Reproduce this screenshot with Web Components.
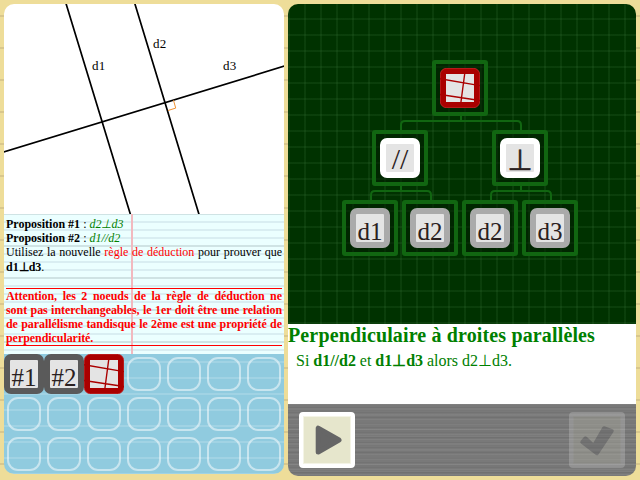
<!DOCTYPE html>
<html lang="fr">
<head>
<meta charset="utf-8">
<title>Déduction</title>
<style>
html,body{margin:0;height:100%}
body{font-family:"Liberation Serif",serif;overflow:hidden;color:#000}
</style>
</head>
<body>
<game-app></game-app>
<script>
function define(name, markup) {
  const t = document.createElement('template');
  t.innerHTML = markup;
  customElements.define(name, class extends HTMLElement {
    constructor() {
      super();
      this.attachShadow({mode: 'open'}).append(t.content.cloneNode(true));
    }
  });
}

define('geometry-figure', `
<style>
:host{display:block;height:210px;background:#fff}
svg{display:block}
text{font-size:13px;letter-spacing:.3px}
</style>
<svg width="280" height="210" viewBox="4 4 280 210">
  <g stroke="#000" stroke-width="1.7">
    <path d="M66 3.5L130.6 215M134.8 3.5L199.200 215M3 152.200L285 65.900"/>
  </g>
  <path d="M173.500 100.200L175.700 108.100L168 110.500" fill="none" stroke="#f09030" stroke-width="1"/>
  <text x="92" y="70">d1</text><text x="153" y="48">d2</text><text x="223" y="70">d3</text>
</svg>`);

define('rule-paper', `
<style>
:host{display:block;box-sizing:border-box;height:140px;padding:3px 2px 0;font-size:12px;line-height:14px;text-align:justify;
 background:linear-gradient(#f2b9bf,#f2b9bf) 127px 0/2px 100% no-repeat,
 repeating-linear-gradient(#cfe3e4 0 1px,transparent 1px 31px,#cfe3e4 31px 32px),
 repeating-linear-gradient(#d9eef2 0 1px,#ebffff 1px 7px,#d9eef2 7px 8px)}
::slotted(p){margin:0}
::slotted(.warn){margin-top:13px!important;border-top:1px solid red;border-bottom:1px solid red;color:red;font-weight:bold;letter-spacing:-.06px}
</style><slot></slot>`);

define('inventory-slot', `
<style>
:host{display:grid;place-items:center;width:40px;height:40px}
.ring{box-sizing:border-box;width:34px;height:34px;border:2px solid rgba(255,255,255,.5);border-radius:11px}
</style><slot><div class="ring"></div></slot>`);

define('inventory-grid', `
<style>
:host{display:grid;grid-template-columns:repeat(7,40px);grid-auto-rows:40px;height:120px;
background:repeating-linear-gradient(#90cbdf 0 7px,#a1d3e4 7px 9px,#90cbdf 9px 16px)}
</style><slot></slot>`);

define('symbol-tile', `
<style>
:host{display:block;box-sizing:border-box;width:40px;height:40px;border:6px solid var(--edge,#aaa);border-radius:7px;background:#e4e4e4;
color:#2a2020;font-size:25px;line-height:28px;text-align:center;white-space:nowrap}
:host([large]){font-size:30px}
:host([perp]){font:29px/28px "DejaVu Sans",sans-serif;-webkit-text-stroke:.5px #2a2020}
:host([large]) .in{padding-top:1px}
:host([perp]) .in{padding-top:2px}
.in{display:flex;justify-content:center;padding-top:4px;height:28px;box-sizing:border-box}
</style><div class="in"><slot></slot></div>`);

define('rule-tile', `
<style>:host{display:block;width:40px;height:40px}svg{display:block}</style>
<svg width="40" height="40" viewBox="0 0 40 40">
<rect width="40" height="40" rx="6.500" fill="#a00"/><rect x=".3" y=".3" width="39.400" height="39.400" rx="6.200" fill="none" stroke="#c84444" stroke-width=".5"/>
<rect x="6" y="6" width="28" height="28" fill="#e4e4e4"/>
<path d="M0 10.800L40 17.600M0 26.500L40 32.500M25.200 2L20.300 39" stroke="#a00" stroke-width="1.400"/>
</svg>`);

customElements.define('tree-fork', class extends HTMLElement {
  constructor() {
    super();
    const w = Number(this.getAttribute('width'));
    this.attachShadow({mode: 'open'}).innerHTML = `
<style>:host{display:block;height:14px;padding-left:2px}svg{display:block}</style>
<svg width="${w + 2}" height="14"><path d="M1 14V9Q1 5 5 5H${w - 3}Q${w + 1} 5 ${w + 1} 9V14M${w / 2 + 1} 0V5" fill="none" stroke="#116611" stroke-width="2"/></svg>`;
  }
});

customElements.define('deduction-board', class extends HTMLElement {
  constructor() {
    super();
    const leaf = t => `<div class="frame"><symbol-tile>${t}</symbol-tile></div>`;
    const pair = (t, kind, a, b) => `<div class="node"><div class="frame"><symbol-tile ${kind} style="--edge:#fff">${t}</symbol-tile></div>
      <tree-fork width="60"></tree-fork><div class="pair">${leaf(a)}${leaf(b)}</div></div>`;
    this.attachShadow({mode: 'open'}).innerHTML = `
<style>
:host{display:flex;box-sizing:border-box;height:320px;padding:56px 0 0 0;justify-content:center;background:
 repeating-linear-gradient(transparent 0 14px,rgba(60,120,60,.18) 14px 16px),
 repeating-linear-gradient(90deg,rgba(60,120,60,.18) 0 2px,transparent 2px 16px),#003200}
.node{display:flex;flex-direction:column;align-items:center}
.frame{box-sizing:border-box;width:56px;height:56px;border:4px solid #116611;border-radius:3px;padding:4px;background:rgba(0,25,0,.5)}
.root{margin-right:4px}
.pair{display:flex;gap:4px}
</style>
<div class="node root"><div class="frame"><rule-tile></rule-tile></div>
<tree-fork width="120"></tree-fork>
<div class="pair">${pair('//', 'large', 'd1', 'd2')}${pair('⊥', 'perp', 'd2', 'd3')}</div></div>`;
  }
});

define('rule-description', `
<style>
:host{display:block;height:80px;background:#fff;color:#008000}
::slotted(h1){margin:0!important;font-size:20px!important;line-height:23px;white-space:nowrap;letter-spacing:.14px}
::slotted(p){margin:5px 0 0 8px!important;font-size:16px;line-height:18px;letter-spacing:-.02px}
</style><slot></slot>`);

define('icon-button', `
<style>
:host{display:grid;place-items:center;box-sizing:border-box;width:56px;height:56px;border:4px solid #fff;border-radius:4px;background:#e6e6cc;box-shadow:inset 0 0 0 1px #f4f4e6}
:host([disabled]){opacity:.2}
</style><slot></slot>`);

define('control-bar', `
<style>
:host{display:flex;box-sizing:border-box;height:72px;padding:8px 11px;justify-content:space-between;
background:repeating-linear-gradient(rgba(255,255,255,.05) 0 1px,transparent 1px 3px,rgba(0,0,0,.05) 3px 4px,transparent 4px 5px),repeating-linear-gradient(#797979 0 4px,#7e7e7e 4px 5px,#777 5px 7px)}
svg{display:block}
</style>
<icon-button><svg width="48" height="48"><path d="M15.200 12.200V36L36 24Z" fill="#666" stroke="#666" stroke-width="5" stroke-linejoin="round"/></svg></icon-button>
<icon-button disabled><svg width="48" height="48"><path d="M9 26L12.500 22L20.700 29.700L31 12L39 15L24 37.500Z" fill="#555" stroke="#555" stroke-width="3.500" stroke-linejoin="round"/></svg></icon-button>`);

customElements.define('game-app', class extends HTMLElement {
  constructor() {
    super();
    const empty = '<inventory-slot></inventory-slot>'.repeat(18);
    this.attachShadow({mode: 'open'}).innerHTML = `
<style>
:host{display:grid;grid-template-columns:280px 348px;gap:4px;box-sizing:border-box;width:640px;height:480px;padding:4px;
background:repeating-linear-gradient(#eedd99 0 15px,#d9c78c 15px 17px,#eedd99 17px 32px)}
section{overflow:hidden;border-radius:10px}
.left{height:470px}.right{height:472px}
i{color:#008000}.red{color:red}.tall{line-height:16px}
</style>
<section class="left">
<geometry-figure></geometry-figure>
<rule-paper>
<p><b>Proposition #1</b> : <i>d2⊥d3</i></p>
<p><b>Proposition #2</b> : <i>d1//d2</i></p>
<p>Utilisez la nouvelle <span class="red">règle de déduction</span> pour prouver que <b class="tall">d1⊥d3</b>.</p>
<p class="warn">Attention, les 2 noeuds de la règle de déduction ne sont pas interchangeables, le 1er doit être une relation de parallélisme tandisque le 2ème est une propriété de perpendicularité.</p>
</rule-paper>
<inventory-grid>
<inventory-slot><symbol-tile style="--edge:#5a5a5a">#1</symbol-tile></inventory-slot>
<inventory-slot><symbol-tile style="--edge:#5a5a5a">#2</symbol-tile></inventory-slot>
<inventory-slot><rule-tile></rule-tile></inventory-slot>
${empty}
</inventory-grid>
</section>
<section class="right">
<deduction-board></deduction-board>
<rule-description><h1>Perpendiculaire à droites parallèles</h1><p>Si <b>d1//d2</b> et <b>d1⊥d3</b> alors d2⊥d3.</p></rule-description>
<control-bar></control-bar>
</section>`;
  }
});
</script>
</body>
</html>
